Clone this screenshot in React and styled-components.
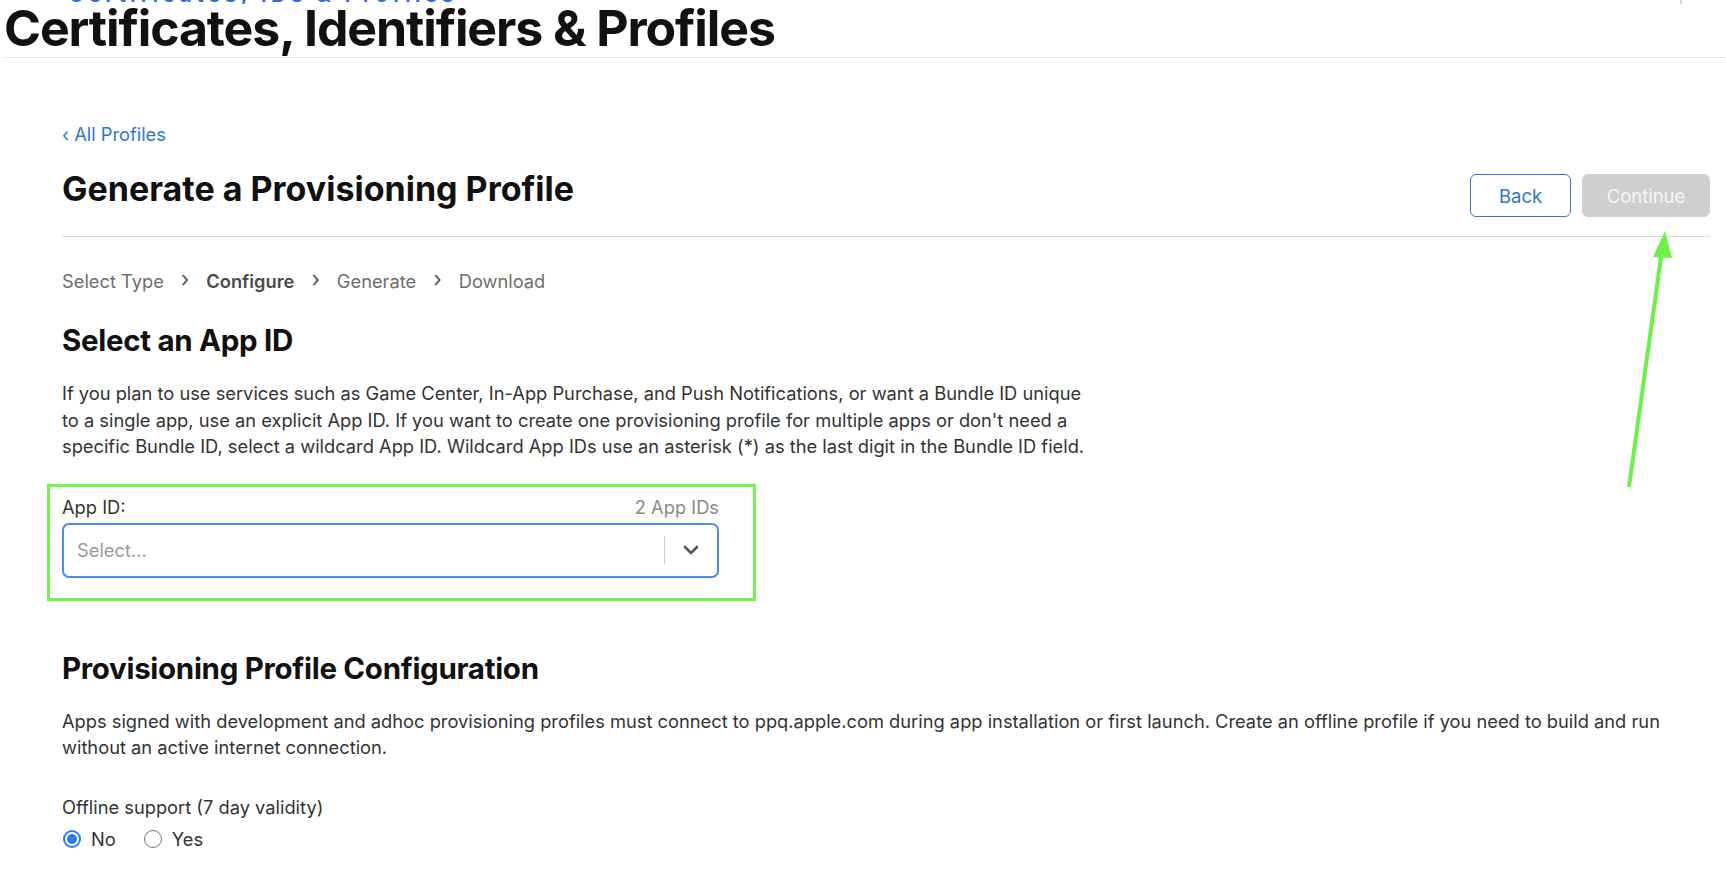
import React, { useState } from "react";
import styled, { createGlobalStyle } from "styled-components";

const GlobalStyle = createGlobalStyle`
  html, body {
    margin: 0;
    padding: 0;
    background: #ffffff;
  }
  body {
    font-family: Inter, "Noto Sans", "Liberation Sans", sans-serif;
    color: #1d1d1f;
    -webkit-font-smoothing: antialiased;
  }
`;

const Page = styled.div`
  position: relative;
  min-height: 874px;
  overflow: hidden;
`;

const TopStrip = styled.div`
  height: 4px;
  overflow: hidden;
  display: flex;
  align-items: flex-end;
  padding-left: 68px;
  padding-right: 44px;
  justify-content: space-between;
`;

const CutText = styled.span`
  font-size: 22px;
  font-weight: 600;
  line-height: 1;
  color: #2f6be6;
  letter-spacing: 4px;
  margin-bottom: -1px;
`;

const CutMark = styled.span`
  width: 2px;
  height: 4px;
  background: #c9d6ff;
  align-self: flex-start;
`;

const SiteHeader = styled.header`
  margin-left: 4px;
  border-bottom: 1px solid #e3e3e3;
  padding-bottom: 4px;
`;

const SiteTitle = styled.h1`
  margin: 0;
  font-size: 50px;
  font-weight: 700;
  line-height: 49px;
  letter-spacing: -1.1px;
  color: #111111;
`;

const Main = styled.main`
  padding: 0 16px 0 62px;
  font-size: 18.3px;
`;

const BackLink = styled.a`
  display: inline-block;
  margin-top: 63px;
  line-height: 26px;
  color: #2f77c8;
  text-decoration: none;
  cursor: pointer;
`;

const HeaderRow = styled.div`
  display: flex;
  align-items: flex-end;
  justify-content: space-between;
  border-bottom: 1px solid #d6d6d6;
  padding: 20px 0 19px;
`;

const PageTitle = styled.h2`
  margin: 0 0 6px;
  font-size: 34px;
  font-weight: 700;
  letter-spacing: 0;
  line-height: 44px;
  color: #111111;
`;

const Actions = styled.div`
  display: flex;
  gap: 11px;
`;

const Button = styled.button`
  font-family: inherit;
  font-size: 18.5px;
  height: 43px;
  border-radius: 6px;
  padding: 0;
  width: ${(p) => (p.$primary ? "128px" : "101px")};
  border: 1px solid ${(p) => (p.$primary ? "#cfcfcf" : "#2f77c8")};
  background: ${(p) => (p.$primary ? "#cfcfcf" : "#ffffff")};
  color: ${(p) => (p.$primary ? "#f6f6f6" : "#2f77c8")};
  cursor: ${(p) => (p.$primary ? "default" : "pointer")};
`;

const Steps = styled.ol`
  list-style: none;
  margin: 0;
  padding: 31px 0 0;
  display: flex;
  align-items: center;
  line-height: 26px;
`;

const Step = styled.li`
  color: ${(p) => (p.$current ? "#4a4a4a" : "#6e6e6e")};
  font-weight: ${(p) => (p.$current ? 600 : 400)};
  display: flex;
  align-items: center;

  &:not(:first-child)::before {
    content: "›";
    font-weight: 400;
    color: #555555;
    font-size: 22px;
    margin: 0 17px;
    position: relative;
    top: -2px;
  }
`;

const SectionTitle = styled.h3`
  margin: ${(p) => p.$top} 0 0;
  font-size: 29.5px;
  font-weight: 700;
  letter-spacing: -0.3px;
  line-height: 36px;
  color: #111111;
`;

const Paragraph = styled.p`
  margin: ${(p) => p.$top} 0 0;
  max-width: ${(p) => p.$max || "none"};
  line-height: 26.5px;
  color: #333333;
`;

const Highlight = styled.div`
  margin: 24px 0 0 -15px;
  width: 709px;
  box-sizing: border-box;
  border: 3px solid #72f24e;
  padding: 7px 34px 20px 12px;
`;

const FieldHead = styled.div`
  display: flex;
  justify-content: space-between;
  align-items: baseline;
  line-height: 26px;
  margin-bottom: 3px;
`;

const FieldLabel = styled.label`
  color: #333333;
`;

const FieldCount = styled.span`
  color: #8a8a8a;
`;

const SelectBox = styled.div`
  height: 55px;
  box-sizing: border-box;
  border: 2px solid #4a8af4;
  border-radius: 7px;
  display: flex;
  align-items: center;
  padding-left: 13px;
  cursor: pointer;
`;

const Placeholder = styled.span`
  flex: 1;
  color: #9a9a9a;
`;

const Separator = styled.span`
  width: 1px;
  height: 28px;
  background: #cccccc;
`;

const Chevron = styled.span`
  width: 52px;
  display: flex;
  justify-content: center;
  align-items: center;
`;

const OptionTitle = styled.div`
  margin-top: 33px;
  line-height: 26px;
  color: #333333;
`;

const RadioRow = styled.div`
  display: flex;
  gap: 27px;
  margin-top: 6px;
`;

const RadioLabel = styled.label`
  display: flex;
  align-items: center;
  gap: 10px;
  line-height: 26px;
  color: #333333;
  cursor: pointer;
`;

const RadioDot = styled.span`
  width: 18px;
  height: 18px;
  box-sizing: border-box;
  border-radius: 50%;
  margin-left: 1px;
  border: ${(p) => (p.$checked ? "2px solid #2f7bf0" : "1.5px solid #767676")};
  background: #ffffff;
  display: flex;
  align-items: center;
  justify-content: center;

  &::after {
    content: "";
    width: 10px;
    height: 10px;
    border-radius: 50%;
    background: ${(p) => (p.$checked ? "#2f7bf0" : "transparent")};
  }
`;

const Annotation = styled.svg`
  position: absolute;
  left: 1610px;
  top: 220px;
  pointer-events: none;
`;

const steps = ["Select Type", "Configure", "Generate", "Download"];

export default function App() {
  const [offline, setOffline] = useState("no");

  return (
    <Page>
      <GlobalStyle />
      <TopStrip>
        <CutText>Certificates, IDs &amp; Profiles</CutText>
        <CutMark />
      </TopStrip>
      <SiteHeader>
        <SiteTitle>Certificates, Identifiers &amp; Profiles</SiteTitle>
      </SiteHeader>

      <Main>
        <BackLink>‹ All Profiles</BackLink>
        <HeaderRow>
          <PageTitle>Generate a Provisioning Profile</PageTitle>
          <Actions>
            <Button>Back</Button>
            <Button $primary disabled>
              Continue
            </Button>
          </Actions>
        </HeaderRow>

        <Steps>
          {steps.map((s) => (
            <Step key={s} $current={s === "Configure"}>
              {s}
            </Step>
          ))}
        </Steps>

        <SectionTitle $top="28px">Select an App ID</SectionTitle>
        <Paragraph $top="22px" $max="1028px">
          If you plan to use services such as Game Center, In-App Purchase, and
          Push Notifications, or want a Bundle ID unique to a single app, use an
          explicit App ID. If you want to create one provisioning profile for
          multiple apps or don't need a specific Bundle ID, select a wildcard App
          ID. Wildcard App IDs use an asterisk (*) as the last digit in the
          Bundle ID field.
        </Paragraph>

        <Highlight>
          <FieldHead>
            <FieldLabel>App ID:</FieldLabel>
            <FieldCount>2 App IDs</FieldCount>
          </FieldHead>
          <SelectBox>
            <Placeholder>Select...</Placeholder>
            <Separator />
            <Chevron>
              <svg width="16" height="10" viewBox="0 0 16 10">
                <path
                  d="M2 2 L8 8 L14 2"
                  fill="none"
                  stroke="#555555"
                  strokeWidth="2.6"
                  strokeLinecap="round"
                  strokeLinejoin="round"
                />
              </svg>
            </Chevron>
          </SelectBox>
        </Highlight>

        <SectionTitle $top="49px">Provisioning Profile Configuration</SectionTitle>
        <Paragraph $top="22px">
          Apps signed with development and adhoc provisioning profiles must
          connect to ppq.apple.com during app installation or first launch.
          Create an offline profile if you need to build and run without an
          active internet connection.
        </Paragraph>

        <OptionTitle>Offline support (7 day validity)</OptionTitle>
        <RadioRow>
          <RadioLabel onClick={() => setOffline("no")}>
            <RadioDot $checked={offline === "no"} />
            No
          </RadioLabel>
          <RadioLabel onClick={() => setOffline("yes")}>
            <RadioDot $checked={offline === "yes"} />
            Yes
          </RadioLabel>
        </RadioRow>
      </Main>

      <Annotation width="80" height="280" viewBox="0 0 80 280">
        <line
          x1="19"
          y1="267"
          x2="52"
          y2="30"
          stroke="#6ef04a"
          strokeWidth="4"
        />
        <polygon points="55,11 43,37 62,38" fill="#6ef04a" />
      </Annotation>
    </Page>
  );
}
